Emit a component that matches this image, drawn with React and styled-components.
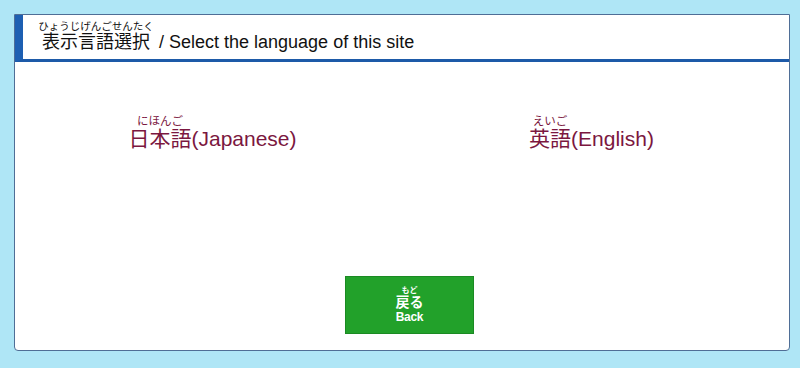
import React from "react";
import styled, { createGlobalStyle } from "styled-components";

const GlobalStyle = createGlobalStyle`
  html, body {
    margin: 0;
    padding: 0;
    background: #afe6f6;
  }
  body {
    font-family: "Liberation Sans", Arial, "Noto Sans CJK JP", sans-serif;
  }
`;

const Page = styled.div`
  padding: 14px 10px 18px 14px;
`;

const Card = styled.div`
  background: #ffffff;
  border: 1px solid #4f6e96;
  border-radius: 0 0 4px 4px;
  height: 337px;
  display: flex;
  flex-direction: column;
  box-sizing: border-box;
`;

const Header = styled.h1`
  margin: 0;
  height: 47px;
  display: flex;
  align-items: flex-end;
  padding: 0 0 6px 19px;
  box-sizing: border-box;
  border-left: 8px solid #1d5fb2;
  border-bottom: 3px solid #1d5aa8;
  font-size: 18px;
  font-weight: normal;
  color: #111;
`;

const Ruby = styled.ruby`
  ruby-position: over;
  rt {
    font-size: ${(p) => p.$rt || 9}px;
    text-align: center;
    margin: 0 ${(p) => -(p.$overhang || 0)}px;
  }
`;

const HeaderRest = styled.span`
  margin-left: 9px;
`;

const Links = styled.div`
  display: grid;
  grid-template-columns: 1fr 1fr;
  padding-top: 53px;
  height: 214px;
  box-sizing: border-box;
`;

const LangLink = styled.a`
  justify-self: center;
  align-self: start;
  color: #7b1740;
  font-size: 21px;
  text-decoration: none;
  transform: translateX(${(p) => p.$shift || 0}px);
`;

const Footer = styled.div`
  display: flex;
  justify-content: center;
  padding-left: 15px;
`;

const BackButton = styled.button`
  width: 129px;
  height: 58px;
  background: #22a12a;
  border: 1px solid #1b8a23;
  color: #fff;
  font-family: "Liberation Sans", Arial, "Noto Sans CJK JP", sans-serif;
  font-weight: bold;
  display: flex;
  flex-direction: column;
  align-items: center;
  justify-content: center;
  gap: 0;
  padding: 0;
`;

const BackJa = styled.span`
  font-size: 14px;
  line-height: 1.1;
`;

const BackEn = styled.span`
  font-size: 12px;
  letter-spacing: -0.3px;
`;

export default function App() {
  return (
    <>
      <GlobalStyle />
      <Page>
        <Card>
          <Header>
            <Ruby $rt={10.5} $overhang={7}>
              表示言語選択<rt>ひょうじげんごせんたく</rt>
            </Ruby>
            <HeaderRest>/ Select the language of this site</HeaderRest>
          </Header>
          <Links>
            <LangLink href="#" $shift={4}>
              <Ruby $rt={11.5}>
                日本語<rt>にほんご</rt>
              </Ruby>
              (Japanese)
            </LangLink>
            <LangLink href="#" $shift={-4}>
              <Ruby $rt={11.5}>
                英語<rt>えいご</rt>
              </Ruby>
              (English)
            </LangLink>
          </Links>
          <Footer>
            <BackButton>
              <BackJa>
                <Ruby $rt={8}>
                  戻る<rt>もど</rt>
                </Ruby>
              </BackJa>
              <BackEn>Back</BackEn>
            </BackButton>
          </Footer>
        </Card>
      </Page>
    </>
  );
}
